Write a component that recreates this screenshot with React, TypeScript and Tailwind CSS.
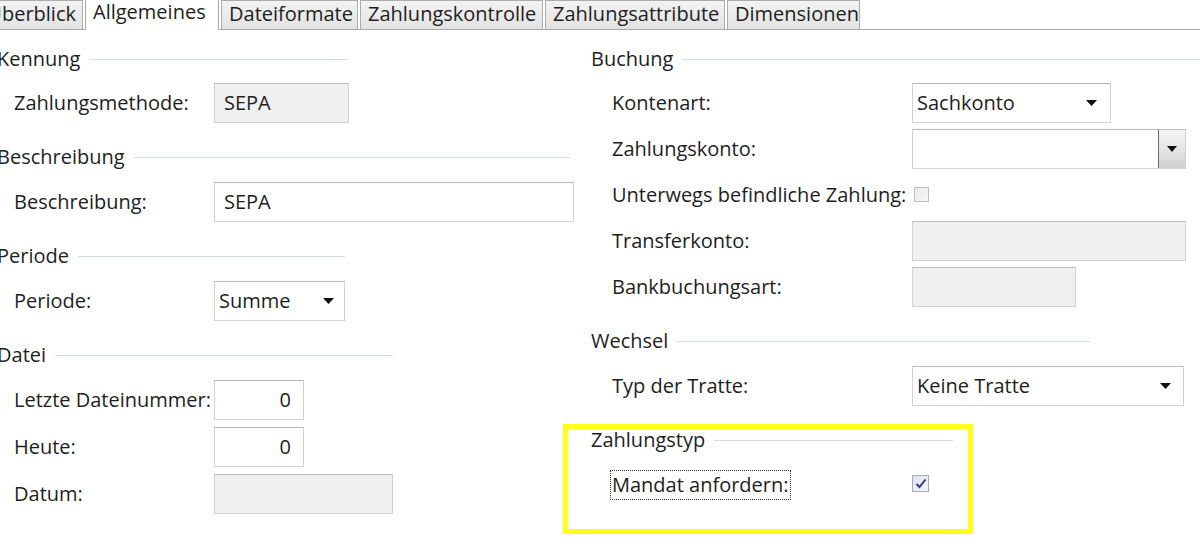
import React from "react";

const font = { fontFamily: '"Open Sans", "Noto Sans", sans-serif' };

function Header({ title, w, textClass = "" }: { title: string; w: string; textClass?: string }) {
  return (
    <div className={`flex items-center h-[30px] ${w}`}>
      <span className={`text-[20px] leading-none text-[#1e1e1e] whitespace-nowrap ${textClass}`}>{title}</span>
      <div className="flex-1 ml-[9px] h-px bg-[#d6dde4]" />
    </div>
  );
}

function Arrow() {
  return (
    <svg width="11" height="6" viewBox="0 0 11 6" className="shrink-0">
      <path d="M0 0 H11 L5.5 6 Z" fill="#111" />
    </svg>
  );
}

function Box({
  w,
  gray = false,
  children,
  right = false,
}: {
  w: string;
  gray?: boolean;
  children?: React.ReactNode;
  right?: boolean;
}) {
  return (
    <div
      className={`h-[40px] ${w} border border-[#d2d2d2] border-t-[#b9b9b9] flex items-center ${
        gray ? "bg-[#f0f0f0]" : "bg-white"
      } ${right ? "justify-end pr-[12px]" : "pl-[9px]"} text-[20px] text-[#1e1e1e]`}
    >
      {children}
    </div>
  );
}

function Select({ w, value, pr = "pr-[10px]" }: { w: string; value: string; pr?: string }) {
  return (
    <div
      className={`h-[40px] ${w} border border-[#d2d2d2] border-t-[#b9b9b9] bg-white flex items-center pl-[4px] ${pr} text-[20px] text-[#1e1e1e]`}
    >
      <span className="flex-1">{value}</span>
      <Arrow />
    </div>
  );
}

function Row({ label, labelW, children }: { label: string; labelW: string; children?: React.ReactNode }) {
  return (
    <div className="flex items-center h-[40px]">
      <div className={`${labelW} shrink-0 text-[20px] text-[#1e1e1e] whitespace-nowrap`}>{label}</div>
      {children}
    </div>
  );
}

const tabs = [
  { t: "Überblick", w: "w-[83px]", first: true },
  { t: "Allgemeines", w: "w-[134px]", active: true },
  { t: "Dateiformate", w: "w-[137px]" },
  { t: "Zahlungskontrolle", w: "w-[183px]" },
  { t: "Zahlungsattribute", w: "w-[180px]" },
  { t: "Dimensionen", w: "w-[133px]" },
];

export default function App() {
  return (
    <div className="w-[1200px] h-[552px] bg-white overflow-hidden relative" style={font}>
      {/* tab bar */}
      <div className="relative h-[30px] flex items-end border-b border-[#a9a9a9]">
        {tabs.map((tab, i) => (
          <div
            key={i}
            className={`${tab.w} shrink-0 ${
              tab.active
                ? "h-[31px] bg-white border border-b-0 border-[#a9a9a9] -mb-px z-10 items-start"
                : "h-[29px] bg-gradient-to-b from-[#f3f3f3] to-[#e2e2e2] border border-b-0 border-[#acacac] items-center"
            } ${i > 0 ? "ml-[2px]" : "border-l-0"} ${
              tab.first ? "justify-end pr-[6px] overflow-hidden" : "pl-[7px]"
            } flex text-[20px] text-[#1e1e1e] whitespace-nowrap leading-none`}
          >
            <span className={tab.active ? "mt-[2px]" : "-mt-[2px]"}>{tab.t}</span>
          </div>
        ))}
      </div>

      <div className="flex pt-[14px]">
        {/* left column */}
        <div className="w-[591px] shrink-0 flex flex-col">
          <Header title="Kennung" w="w-[348px]" textClass="-ml-[3px]" />
          <div className="mt-[9px] pl-[14px] flex flex-col gap-[7px]">
            <Row label="Zahlungsmethode:" labelW="w-[200px]">
              <Box w="w-[135px]" gray>
                SEPA
              </Box>
            </Row>
          </div>
          <div className="mt-[19px]">
            <Header title="Beschreibung" w="w-[570px]" textClass="-ml-[3px]" />
          </div>
          <div className="mt-[10px] pl-[14px] flex flex-col gap-[7px]">
            <Row label="Beschreibung:" labelW="w-[200px]">
              <Box w="w-[360px]">SEPA</Box>
            </Row>
          </div>
          <div className="mt-[19px]">
            <Header title="Periode" w="w-[345px]" textClass="-ml-[3px]" />
          </div>
          <div className="mt-[10px] pl-[14px] flex flex-col gap-[7px]">
            <Row label="Periode:" labelW="w-[200px]">
              <Select w="w-[131px]" value="Summe" />
            </Row>
          </div>
          <div className="mt-[19px]">
            <Header title="Datei" w="w-[393px]" textClass="-ml-[3px]" />
          </div>
          <div className="mt-[10px] pl-[14px] flex flex-col gap-[7px]">
            <Row label="Letzte Dateinummer:" labelW="w-[200px]">
              <Box w="w-[90px]" right>
                0
              </Box>
            </Row>
            <Row label="Heute:" labelW="w-[200px]">
              <Box w="w-[90px]" right>
                0
              </Box>
            </Row>
            <Row label="Datum:" labelW="w-[200px]">
              <Box w="w-[179px]" gray />
            </Row>
          </div>
        </div>

        {/* right column */}
        <div className="flex-1 flex flex-col">
          <Header title="Buchung" w="w-[609px]" />
          <div className="mt-[9px] pl-[21px] flex flex-col gap-[6px]">
            <Row label="Kontenart:" labelW="w-[300px]">
              <Select w="w-[199px]" value="Sachkonto" pr="pr-[13px]" />
            </Row>
            <Row label="Zahlungskonto:" labelW="w-[300px]">
              <div className="h-[40px] w-[274px] border border-[#d2d2d2] border-t-[#b9b9b9] bg-white flex">
                <div className="flex-1" />
                <div className="w-[27px] border-l border-[#6a6a6a] bg-gradient-to-b from-[#f4f4f4] via-[#e6e6e6] to-[#cfcfcf] flex items-center justify-center">
                  <svg width="10" height="6" viewBox="0 0 10 6">
                    <path d="M0 0 H10 L5 6 Z" fill="#111" />
                  </svg>
                </div>
              </div>
            </Row>
            <div className="flex items-center h-[40px]">
              <div className="text-[20px] text-[#1e1e1e] whitespace-nowrap">Unterwegs befindliche Zahlung:</div>
              <div className="ml-[8px] -mt-[2px] w-[15px] h-[15px] border border-[#bdbdbd] bg-gradient-to-br from-[#e9e9e9] to-[#f8f8f8]" />
            </div>
            <Row label="Transferkonto:" labelW="w-[300px]">
              <Box w="w-[274px]" gray />
            </Row>
            <Row label="Bankbuchungsart:" labelW="w-[300px]">
              <Box w="w-[164px]" gray />
            </Row>
          </div>
          <div className="mt-[19px]">
            <Header title="Wechsel" w="w-[499px]" />
          </div>
          <div className="mt-[10px] pl-[21px] flex flex-col gap-[6px]">
            <Row label="Typ der Tratte:" labelW="w-[300px]">
              <Select w="w-[272px]" value="Keine Tratte" pr="pr-[12px]" />
            </Row>
          </div>
          <div className="mt-[19px] relative">
            <Header title="Zahlungstyp" w="w-[362px]" />
            <div className="mt-[10px] pl-[21px] flex flex-col">
              <div className="flex items-center h-[40px]">
                <div className="w-[300px] shrink-0">
                  <span className="inline-block text-[20px] text-[#1e1e1e] whitespace-nowrap outline-1 outline-dotted outline-[#333] outline-offset-[1px] leading-[26px]">
                    Mandat anfordern:
                  </span>
                </div>
                <div className="-mt-[4px] w-[17px] h-[17px] border border-[#a8a8b8] bg-gradient-to-br from-[#dfe3ee] to-[#f4f5fa] flex items-center justify-center">
                  <svg width="12" height="11" viewBox="0 0 12 11">
                    <path d="M1.5 6 L4.5 9 L10.5 1.5" stroke="#2a3f7a" strokeWidth="2" fill="none" />
                  </svg>
                </div>
              </div>
            </div>
            <div className="absolute left-[-28px] top-[-1px] w-[410px] h-[110px] border-[5px] border-[#ffff1a] pointer-events-none" />
          </div>
        </div>
      </div>
    </div>
  );
}
